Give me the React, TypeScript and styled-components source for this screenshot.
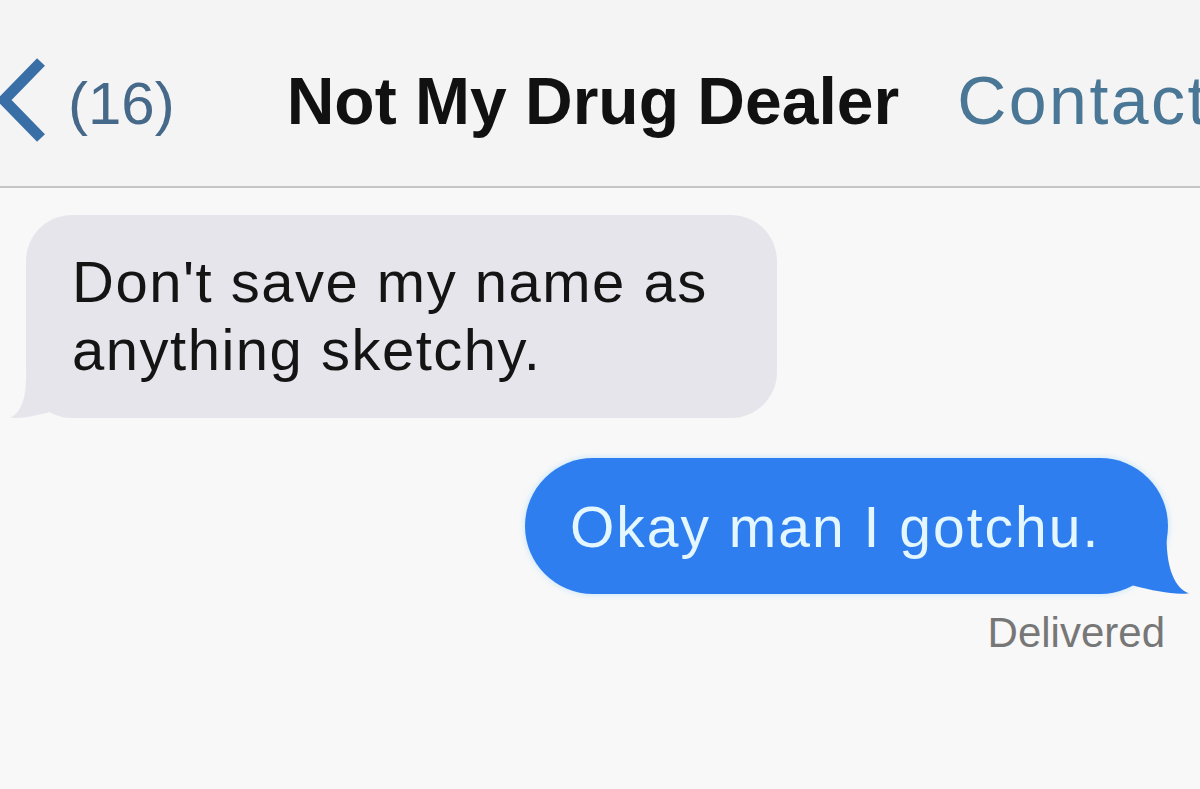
import styled, { createGlobalStyle } from "styled-components";

const PAGE_BG = "#f8f8f8";
const GREY = "#e5e5eb";
const BLUE = "#2f7ef0";

const GlobalStyle = createGlobalStyle`
  html, body {
    margin: 0;
    padding: 0;
    background: ${PAGE_BG};
    font-family: "Liberation Sans", Arial, Helvetica, sans-serif;
  }
  #root {
    width: 1200px;
    height: 789px;
    overflow: hidden;
  }
`;

function BackChevron() {
  return (
    <Chevron viewBox="0 0 46 84" width="46" height="84">
      <polyline
        points="41,4 4,42 41,80"
        fill="none"
        stroke="#3a6ea6"
        strokeWidth="11"
        strokeLinejoin="miter"
      />
    </Chevron>
  );
}

function Tail({ side, color }: { side: "left" | "right"; color: string }) {
  return (
    <TailShape $side={side} viewBox="0 0 40 40">
      <path
        d="M16,0 C16,22 10,36 0,39.5 C10,41 24,38 40,34 L40,0 Z"
        fill={color}
      />
    </TailShape>
  );
}

export default function App() {
  return (
    <>
      <GlobalStyle />
      <Screen>
        <NavBar>
          <BackChevron />
          <Count>(16)</Count>
          <Title>Not My Drug Dealer</Title>
          <ContactLink>Contact</ContactLink>
        </NavBar>
        <Thread>
          <Bubble $from="them">
            <Tail side="left" color={GREY} />
            <BubbleText>Don't save my name as anything sketchy.</BubbleText>
          </Bubble>
          <Bubble $from="me">
            <Tail side="right" color={BLUE} />
            <BubbleText>Okay man I gotchu.</BubbleText>
          </Bubble>
          <Status>Delivered</Status>
        </Thread>
      </Screen>
    </>
  );
}

const Screen = styled.div`
  width: 1200px;
  height: 789px;
  display: flex;
  flex-direction: column;
  background: ${PAGE_BG};
`;

const NavBar = styled.header`
  box-sizing: border-box;
  height: 188px;
  padding-top: 66px;
  display: flex;
  align-items: baseline;
  background: #f4f4f4;
  border-bottom: 2px solid #c4c4c4;
  overflow: hidden;
  white-space: nowrap;
`;

const Chevron = styled.svg`
  align-self: flex-start;
  margin-top: -8px;
  flex: none;
`;

const Count = styled.span`
  margin-left: 22px;
  font-size: 60px;
  line-height: 1;
  color: #46698a;
`;

const Title = styled.span`
  margin-left: 112px;
  font-size: 66px;
  line-height: 1;
  font-weight: 700;
  color: #111;
`;

const ContactLink = styled.span`
  margin-left: 58px;
  font-size: 68px;
  line-height: 1;
  letter-spacing: 2.5px;
  color: #4a7795;
  flex: none;
`;

const Thread = styled.main`
  flex: 1;
  display: flex;
  flex-direction: column;
  padding-top: 27px;
`;

const Bubble = styled.div<{ $from: "me" | "them" }>`
  position: relative;
  box-sizing: border-box;
  ${({ $from }) =>
    $from === "them"
      ? `
    align-self: flex-start;
    margin-left: 26px;
    width: 751px;
    padding: 33px 50px 34px 46px;
    border-radius: 46px;
    background: ${GREY};
    color: #141414;
    font-size: 58px;
    line-height: 68px;
    letter-spacing: 1.5px;
  `
      : `
    align-self: flex-end;
    margin-top: 40px;
    margin-right: 32px;
    width: 643px;
    padding: 37px 20px 35px 45px;
    border-radius: 68px;
    background: ${BLUE};
    color: #e4f7ff;
    font-size: 57px;
    line-height: 64px;
    letter-spacing: 2px;
    box-shadow: 0 0 6px rgba(140, 210, 255, 0.55);
  `}
`;

const BubbleText = styled.div`
  position: relative;
`;

const TailShape = styled.svg<{ $side: "left" | "right" }>`
  position: absolute;
  bottom: 0;
  ${({ $side }) =>
    $side === "left"
      ? `
    left: -16px;
    width: 40px;
    height: 40px;
  `
      : `
    right: -21px;
    width: 56px;
    height: 56px;
    transform: scaleX(-1);
  `}
`;

const Status = styled.div`
  align-self: flex-end;
  margin-top: 18px;
  margin-right: 35px;
  font-size: 42px;
  line-height: 1;
  color: #777;
`;
